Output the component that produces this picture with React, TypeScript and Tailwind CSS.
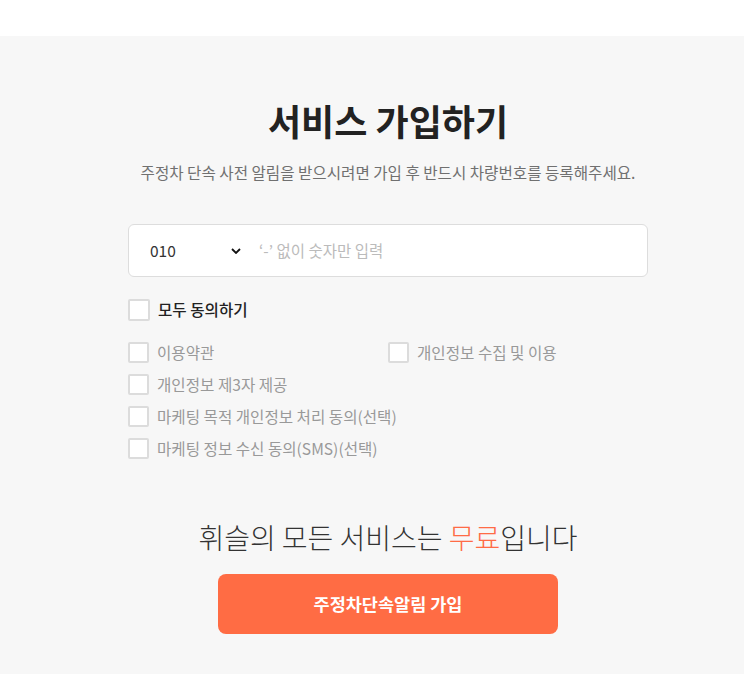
import type { FC } from 'react';

const terms = [
  { label: '이용약관', col: 1 },
  { label: '개인정보 수집 및 이용', col: 2 },
  { label: '개인정보 제3자 제공', col: 1 },
  { label: '마케팅 목적 개인정보 처리 동의(선택)', col: 1 },
  { label: '마케팅 정보 수신 동의(SMS)(선택)', col: 1 },
];

const Box: FC<{ big?: boolean }> = ({ big }) => (
  <span
    className={
      big
        ? 'block h-[22px] w-[22px] shrink-0 rounded-[2px] border-2 border-[#dcdcdc] bg-white'
        : 'block h-[21px] w-[21px] shrink-0 rounded-[2px] border-2 border-[#dcdcdc] bg-white'
    }
  />
);

const App: FC = () => {
  return (
    <div
      className="min-h-[674px] bg-white"
      style={{ fontFamily: '"Noto Sans CJK KR", "Noto Sans", sans-serif' }}
    >
      <div className="h-[36px] bg-white" />
      <div className="min-h-[638px] bg-[#f7f7f7] pt-[58px] pb-10">
        <div className="ml-[128px] w-[520px]">
          <h1 className="text-center text-[36px] font-bold leading-[52px] text-[#222]">
            서비스 가입하기
          </h1>
          <p className="mt-[15px] text-center text-[15.6px] leading-[22px] text-[#707070]">
            주정차 단속 사전 알림을 받으시려면 가입 후 반드시 차량번호를 등록해주세요.
          </p>

          <div className="mt-[41px] flex h-[53px] items-center rounded-[6px] border border-[#dddddd] bg-white pl-[21px]">
            <div className="flex w-[99px] items-center justify-between pr-[8px]">
              <span className="text-[15.5px] text-[#333]">010</span>
              <svg viewBox="0 0 10 6" className="h-[6px] w-[10px]">
                <path d="M1 1l4 4 4-4" fill="none" stroke="#111" strokeWidth="1.8" />
              </svg>
            </div>
            <span className="pl-[10px] text-[15.5px] text-[#bbbbbb]">‘-’ 없이 숫자만 입력</span>
          </div>

          <label className="mt-[21px] flex items-center gap-[8px]">
            <Box big />
            <span className="text-[15.6px] font-medium text-[#222]">모두 동의하기</span>
          </label>

          <div className="mt-[21px] grid grid-cols-2 gap-y-[11px]">
            {terms.map((t) => (
              <label
                key={t.label}
                className={
                  t.col === 2
                    ? 'flex items-center gap-[8px]'
                    : 'col-start-1 flex items-center gap-[8px]'
                }
              >
                <Box />
                <span className="whitespace-nowrap text-[15.6px] leading-[21px] text-[#999]">
                  {t.label}
                </span>
              </label>
            ))}
          </div>

          <p className="mt-[58px] text-center text-[28px] font-light leading-[40px] text-[#333]">
            휘슬의 모든 서비스는 <span className="text-[#ff6b45]">무료</span>입니다
          </p>

          <button
            type="button"
            className="mx-auto mt-[17px] flex h-[60px] w-[340px] items-center justify-center rounded-[8px] bg-[#ff6c44] text-[17.5px] font-bold text-white"
          >
            주정차단속알림 가입
          </button>
        </div>
      </div>
    </div>
  );
};

export default App;
